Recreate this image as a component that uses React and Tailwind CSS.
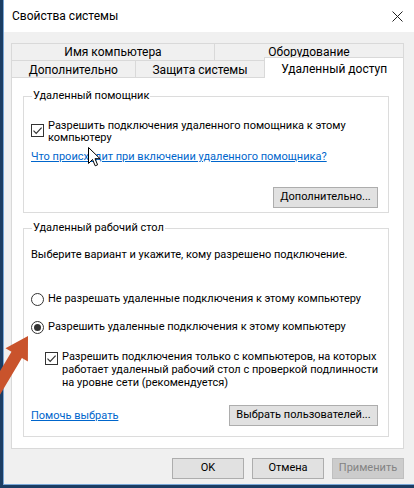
import React from "react";

function CheckBox() {
  return (
    <span className="w-[13px] h-[13px] border border-[#333333] bg-white flex items-center justify-center shrink-0">
      <svg width="11" height="11" viewBox="0 0 11 11">
        <path d="M1.5 5.6 L4.2 8.3 L9.6 2.6" fill="none" stroke="#333333" strokeWidth="1.2" />
      </svg>
    </span>
  );
}

function Radio({ checked }) {
  return (
    <span className="w-[13px] h-[13px] rounded-full border border-[#333333] bg-white flex items-center justify-center shrink-0">
      {checked && <span className="w-[7px] h-[7px] rounded-full bg-[#333333]" />}
    </span>
  );
}

function Btn({ children, className = "" }) {
  return (
    <div className={"h-[21px] flex items-center justify-center border border-[#adadad] bg-[#e1e1e1] text-black " + className}>
      {children}
    </div>
  );
}

export default function App() {
  return (
    <div className="relative w-[414px] h-[488px] overflow-hidden bg-[#1b3d63] font-['Roboto','Noto_Sans',sans-serif] text-[11px] text-black">
      <div className="ml-[3px] w-[411px] h-[485px] flex flex-col border-l border-b border-[#7aa7d6]">
        {/* title bar */}
        <div className="h-[32px] bg-white flex items-center justify-between pl-[8px] pr-[11px]">
          <span className="text-[12px] text-black">Свойства системы</span>
          <svg width="11" height="11" viewBox="0 0 11 11">
            <path d="M0.5 0.5 L10.5 10.5 M10.5 0.5 L0.5 10.5" stroke="#222" strokeWidth="1" />
          </svg>
        </div>
        {/* body */}
        <div className="flex-1 bg-[#f0f0f0] flex flex-col pt-[11px] pl-[7px] pr-[10px]">
          {/* tabs row 1 */}
          <div className="flex h-[18px] text-[12px]">
            <div className="w-[204px] border border-[#d9d9d9] bg-[#f0f0f0] flex items-center justify-center">Имя компьютера</div>
            <div className="w-[190px] -ml-px border border-[#d9d9d9] bg-[#f0f0f0] flex items-center justify-center">Оборудование</div>
          </div>
          {/* tabs row 2 */}
          <div className="flex items-start h-[17px] -mt-px text-[12px]">
            <div className="w-[125px] h-[17px] border border-b-0 border-[#d9d9d9] bg-[#f0f0f0] flex items-center justify-center pt-[2px]">Дополнительно</div>
            <div className="w-[131px] h-[17px] -ml-px border border-b-0 border-[#d9d9d9] bg-[#f0f0f0] flex items-center justify-center pt-[2px]">Защита системы</div>
            <div className="relative z-10 w-[140px] h-[21px] -ml-px -mt-[3px] -mb-px border border-b-0 border-[#d9d9d9] bg-white flex items-start justify-center pt-[2px]">Удаленный доступ</div>
          </div>
          {/* panel */}
          <div className="relative z-0 h-[372px] bg-white border border-[#d9d9d9] flex flex-col pl-[11px] pr-[14px]">
            {/* group 1 */}
            <div className="mt-[18px] h-[117px] border border-[#dcdcdc] flex flex-col pl-[7px]">
              <div className="-mt-[8px] h-[14px] leading-[14px] w-fit ml-[1px] px-[1px] bg-white">Удаленный помощник</div>
              <div className="mt-[17px] flex items-start gap-[4px]">
                <span className="mt-[4px]"><CheckBox /></span>
                <div className="leading-[12px]">
                  Разрешить подключения удаленного помощника к этому<br />компьютеру
                </div>
              </div>
              <div className="mt-[6px] h-[14px] leading-[14px] text-[#0066cc] underline">Что происходит при включении удаленного помощника?</div>
              <div className="mt-[23px] flex justify-end pr-[10px]">
                <Btn className="w-[105px]">Дополнительно...</Btn>
              </div>
            </div>
            {/* group 2 */}
            <div className="mt-[15px] h-[209px] border border-[#dcdcdc] flex flex-col pl-[7px]">
              <div className="-mt-[8px] h-[14px] leading-[14px] w-fit ml-[1px] px-[1px] bg-white">Удаленный рабочий стол</div>
              <div className="mt-[13px] h-[14px] leading-[14px]">Выберите вариант и укажите, кому разрешено подключение.</div>
              <div className="mt-[30px] h-[14px] flex items-center gap-[4px]">
                <Radio />
                <span>Не разрешать удаленные подключения к этому компьютеру</span>
              </div>
              <div className="mt-[14px] h-[14px] flex items-center gap-[4px]">
                <Radio checked />
                <span>Разрешить удаленные подключения к этому компьютеру</span>
              </div>
              <div className="mt-[16px] ml-[14px] flex items-start gap-[4px]">
                <span className="mt-[2px]"><CheckBox /></span>
                <div className="leading-[13px]">
                  Разрешить подключения только с компьютеров, на которых<br />
                  работает удаленный рабочий стол с проверкой подлинности<br />
                  на уровне сети (рекомендуется)
                </div>
              </div>
              <div className="mt-[16px] flex items-center justify-between pr-[10px]">
                <span className="text-[#0066cc] underline mt-[2px]">Помочь выбрать</span>
                <Btn className="w-[149px]">Выбрать пользователей...</Btn>
              </div>
            </div>
          </div>
          {/* bottom buttons */}
          <div className="mt-[9px] flex justify-end gap-[8px]">
            <Btn className="w-[72px] border-[#0078d7]">OK</Btn>
            <Btn className="w-[72px]">Отмена</Btn>
            <div className="w-[72px] h-[21px] flex items-center justify-center border border-[#bfbfbf] bg-[#cccccc] text-[#838383]">Применить</div>
          </div>
        </div>
      </div>

      {/* red arrow annotation */}
      <svg className="absolute left-0 top-[330px]" width="40" height="80" viewBox="0 330 40 80">
        <polygon
          points="28,336 27.9,361.6 21.9,358 -8.8,409.5 -19.2,403.3 11.5,351.8 5.5,348.2"
          fill="#c9532c"
        />
      </svg>

      {/* mouse cursor */}
      <svg className="absolute left-[88px] top-[147px]" width="14" height="22" viewBox="0 0 14 22">
        <path d="M0.5 0.5 L0.5 16.5 L4.5 12.5 L7.2 18.8 L9.6 17.8 L7 11.7 L12 11.7 Z" fill="white" stroke="black" strokeWidth="1" strokeLinejoin="miter" />
      </svg>
    </div>
  );
}
